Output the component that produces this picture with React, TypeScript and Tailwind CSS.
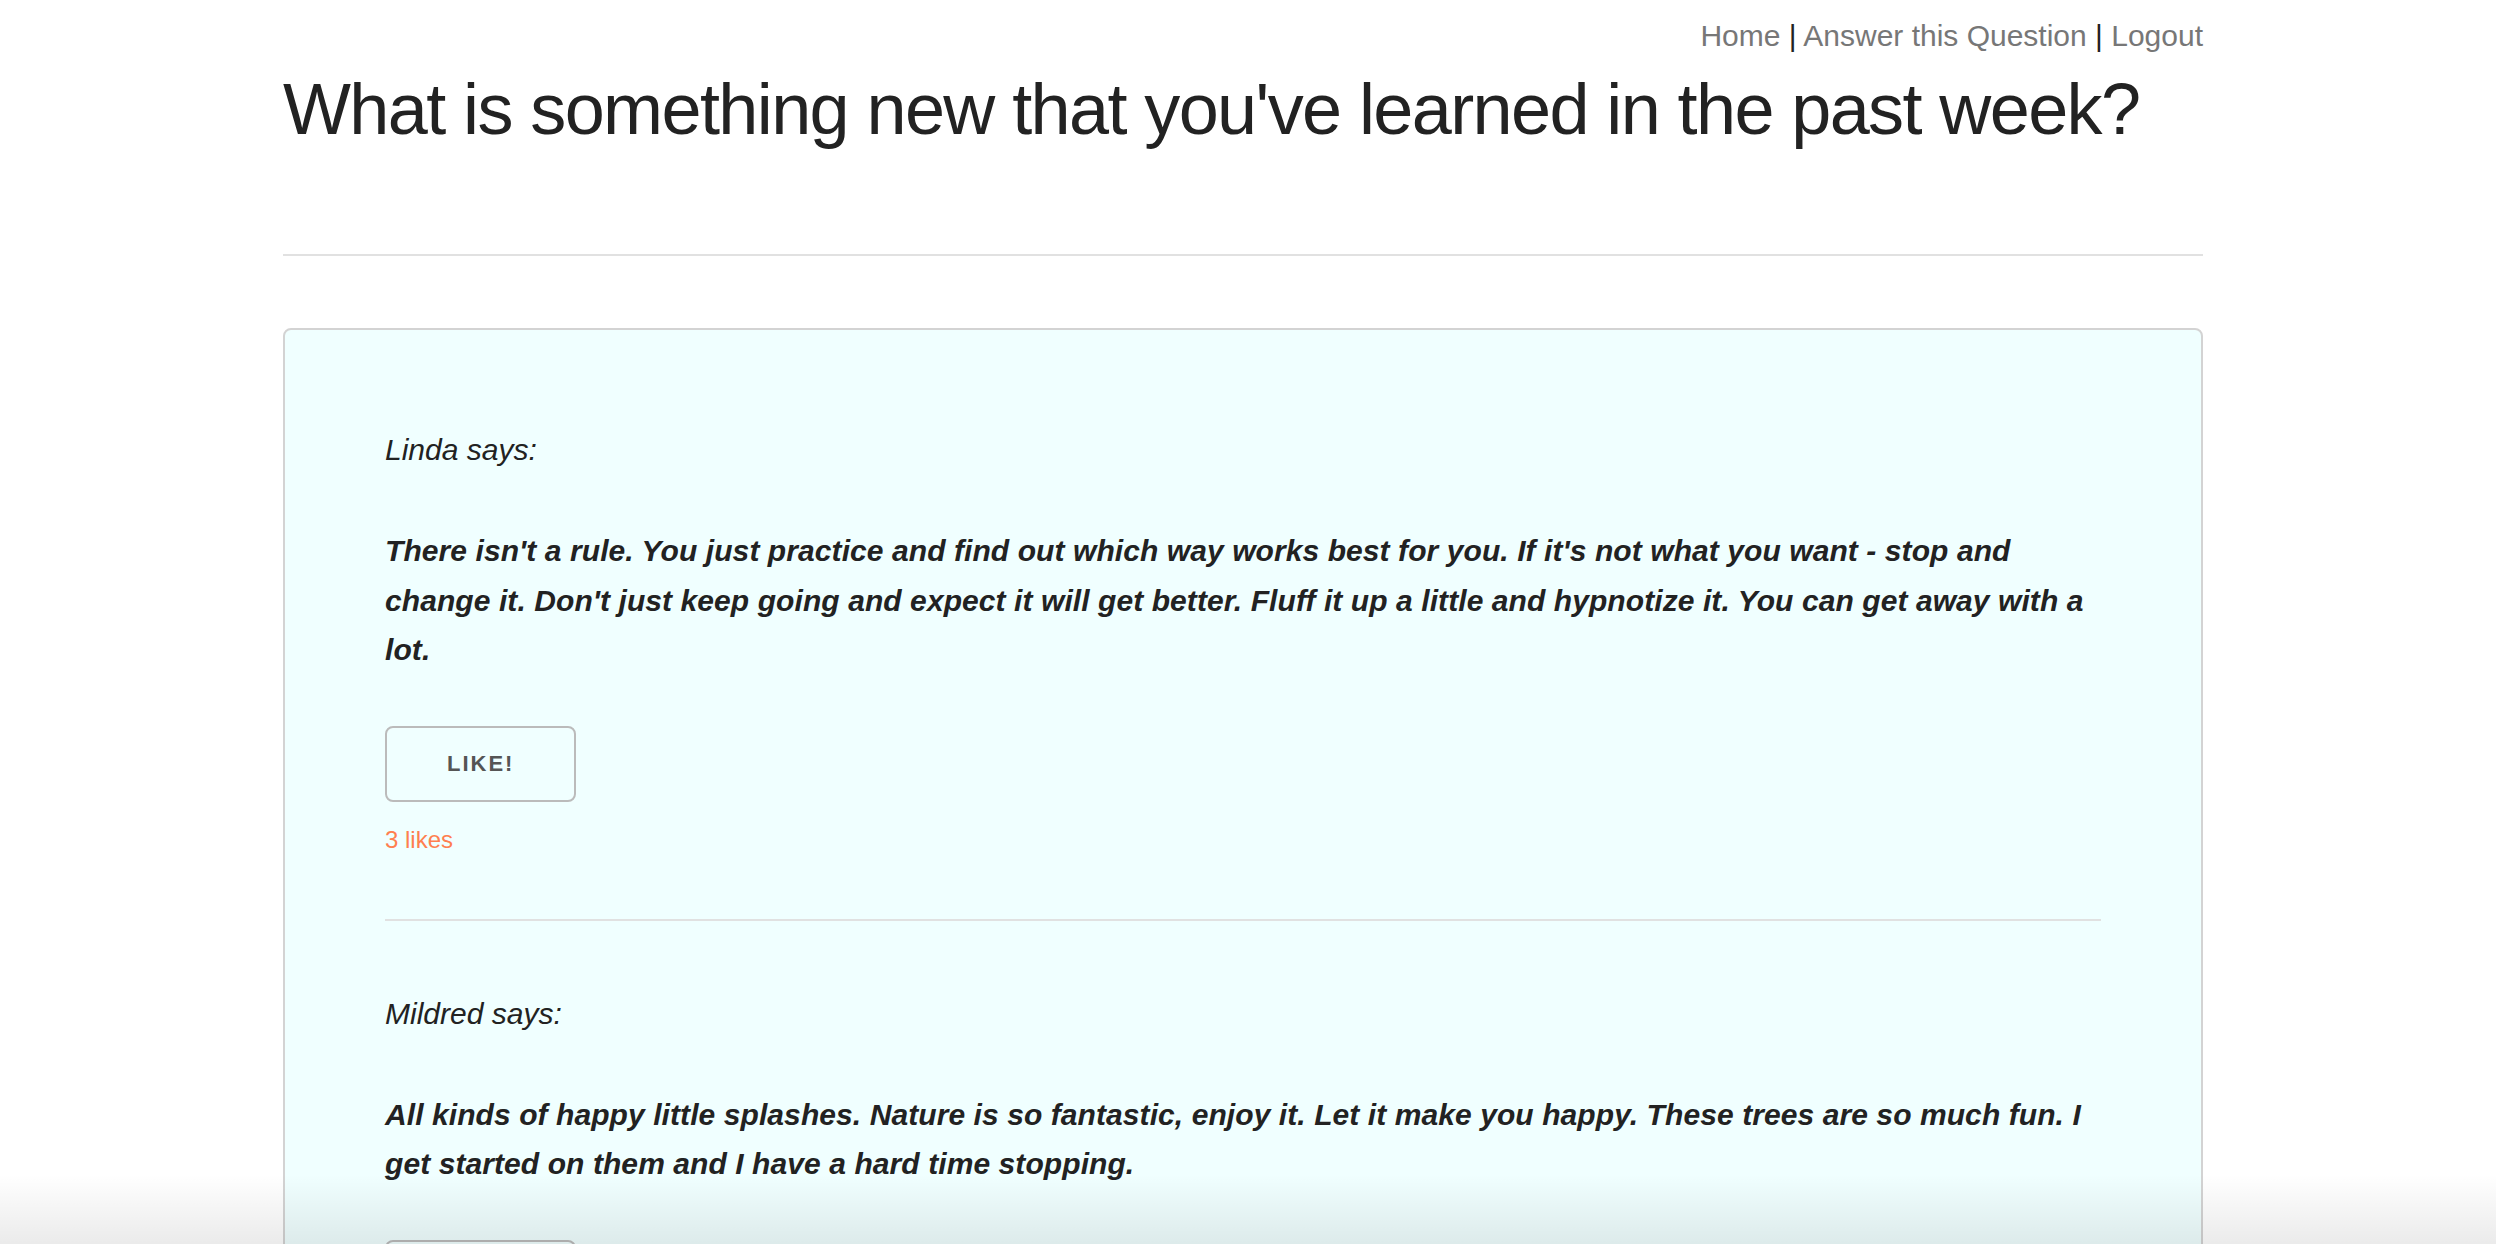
import React from "react";

type Answer = {
  name: string;
  lines: string[];
  likes: number;
};

const answers: Answer[] = [
  {
    name: "Linda",
    lines: [
      "There isn't a rule. You just practice and find out which way works best for you. If it's not what you want - stop and",
      "change it. Don't just keep going and expect it will get better. Fluff it up a little and hypnotize it. You can get away with a",
      "lot.",
    ],
    likes: 3,
  },
  {
    name: "Mildred",
    lines: [
      "All kinds of happy little splashes. Nature is so fantastic, enjoy it. Let it make you happy. These trees are so much fun. I",
      "get started on them and I have a hard time stopping.",
    ],
    likes: 1,
  },
];

const AnswerItem: React.FC<{ answer: Answer; last: boolean }> = ({ answer, last }) => {
  return (
    <div>
      <p className="italic text-[30px] leading-[48px]">{answer.name} says:</p>
      <p className="mt-[52px] font-bold italic text-[30px] leading-[49.5px] tracking-[0.08px]">
        {answer.lines.map((line, i) => (
          <React.Fragment key={i}>
            {line}
            {i < answer.lines.length - 1 && <br />}
          </React.Fragment>
        ))}
      </p>
      <button
        type="button"
        className="mt-[51px] h-[76px] px-[60px] border-2 border-[#bbbbbb] rounded-[8px] bg-transparent text-[#555555] text-[22px] font-bold tracking-[2px] uppercase leading-[72px]"
      >
        Like!
      </button>
      <p className="mt-[20px] text-[24px] leading-[35px] text-[#ff7f50]">
        {answer.likes} {answer.likes === 1 ? "like" : "likes"}
      </p>
      {!last && <hr className="mt-[62px] mb-[69px] border-0 border-t-2 border-[#e1e1e1]" />}
    </div>
  );
};

export default function App() {
  return (
    <div className="relative h-[1244px] overflow-hidden bg-white text-[#222222] font-['Liberation_Sans',Arial,sans-serif]">
      <div className="ml-[283px] w-[1920px]">
        <nav className="pt-[12px] text-right text-[30px] leading-[48px]">
          <a href="#" className="text-[#777777]">Home</a> |{" "}
          <a href="#" className="text-[#777777]">Answer this Question</a> |{" "}
          <a href="#" className="text-[#777777]">Logout</a>
        </nav>
        <h2 className="mt-[4px] text-[72px] leading-[90px] tracking-[-1.6px]">
          What is something new that you've learned in the past week?
        </h2>
        <hr className="mt-[100px] border-0 border-t-2 border-[#e1e1e1]" />
        <div className="mt-[72px] border-2 border-[#d3d3d3] rounded-[8px] bg-[#f0ffff] px-[100px] pt-[96px] pb-[100px]">
          {answers.map((a, i) => (
            <AnswerItem key={a.name} answer={a} last={i === answers.length - 1} />
          ))}
        </div>
      </div>
      <div className="pointer-events-none absolute bottom-0 left-0 right-0 h-[70px] bg-linear-to-b from-black/0 to-black/[0.08]" />
    </div>
  );
}
